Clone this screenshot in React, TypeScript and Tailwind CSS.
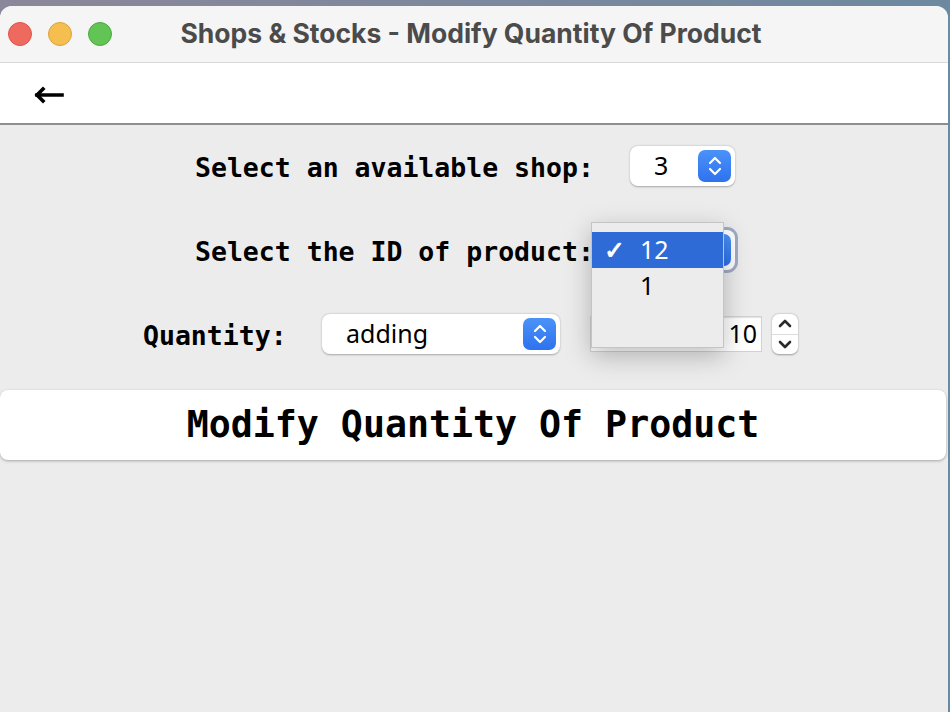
import React from 'react'

const mono = { fontFamily: '"DejaVu Sans Mono", "Liberation Mono", monospace' }

function BlueStepper() {
  return (
    <div className="flex h-[32px] w-[33px] items-center justify-center rounded-[7px] bg-gradient-to-b from-[#4b92f8] to-[#2e72ee]">
      <svg width="16" height="22" viewBox="0 0 16 22" fill="none" stroke="white" strokeWidth="2.2" strokeLinecap="round" strokeLinejoin="round">
        <path d="M3 8 L8 3 L13 8" />
        <path d="M3 14 L8 19 L13 14" />
      </svg>
    </div>
  )
}

function App() {
  return (
    <div className="h-[712px] w-[950px] overflow-hidden bg-gradient-to-r from-[#8b879a] to-[#6d89a0]">
      <div className="mt-[6px] flex h-[706px] w-[948px] flex-col overflow-hidden rounded-t-[12px] bg-[#ececec]">
        {/* title bar */}
        <div className="relative flex h-[57px] shrink-0 items-center border-b border-[#d9d9d9] bg-[#f5f5f5]">
          <div className="flex items-center gap-[16px] pl-[8px]">
            <div className="h-[24px] w-[24px] rounded-full border border-[#e0534c] bg-[#ee6a5f]" />
            <div className="h-[24px] w-[24px] rounded-full border border-[#dea13a] bg-[#f5bf4f]" />
            <div className="h-[24px] w-[24px] rounded-full border border-[#4ea940] bg-[#61c454]" />
          </div>
          <div className="absolute left-0 right-0 pr-[6px] text-center text-[26.5px] font-bold text-[#4b4b4b]" style={{ fontFamily: 'Inter, "Noto Sans", sans-serif' }}>
            Shops &amp; Stocks - Modify Quantity Of Product
          </div>
        </div>
        {/* toolbar */}
        <div className="flex h-[62px] shrink-0 items-center border-b-2 border-[#8e8e8e] bg-white pl-[34px] pt-[4px]">
          <svg width="30" height="18" viewBox="0 0 30 18" fill="none" stroke="black" strokeWidth="3.6" strokeLinecap="square" strokeLinejoin="miter">
            <path d="M3 9 H28" />
            <path d="M9 3 L3 9 L9 15" />
          </svg>
        </div>
        {/* content */}
        <div className="relative flex flex-col pt-[21px]" style={mono}>
          <div className="flex h-[40px] items-center pl-[195px]">
            <span className="w-[435px] pt-[4px] text-[26.5px] font-bold text-black">Select an available shop:</span>
            <div className="flex h-[40px] w-[105px] items-center justify-between rounded-[8px] bg-white pl-[24px] pr-[4px] shadow-[0_0.5px_2px_rgba(0,0,0,0.3)]">
              <span className="text-[25px] text-black" style={{ fontFamily: '"Noto Sans", sans-serif' }}>3</span>
              <BlueStepper />
            </div>
          </div>
          <div className="mt-[44px] flex h-[40px] items-center pl-[195px]">
            <span className="w-[401px] pt-[4px] text-[26.5px] font-bold text-black">Select the ID of product:</span>
            <div className="flex h-[40px] w-[139px] items-center justify-end rounded-[8px] bg-white pr-[4px] shadow-[0_0_0_3px_rgba(110,130,170,0.6)]">
              <BlueStepper />
            </div>
          </div>
          <div className="mt-[44px] flex h-[40px] items-center pl-[143px]">
            <span className="w-[179px] pt-[4px] text-[26.5px] font-bold text-black">Quantity:</span>
            <div className="flex h-[40px] w-[238px] items-center justify-between rounded-[8px] bg-white pl-[24px] pr-[4px] shadow-[0_0.5px_2px_rgba(0,0,0,0.3)]">
              <span className="text-[25px] text-black" style={{ fontFamily: '"Noto Sans", sans-serif' }}>adding</span>
              <BlueStepper />
            </div>
            <div className="ml-[30px] flex h-[36px] w-[172px] items-center justify-end border border-[#d2d2d2] bg-white pr-[4px] shadow-[inset_0_1px_1px_rgba(0,0,0,0.12)]">
              <span className="text-[25px] text-black" style={{ fontFamily: '"Noto Sans", sans-serif' }}>10</span>
            </div>
            <div className="ml-[10px] flex h-[40px] w-[26px] flex-col rounded-[7px] bg-white shadow-[0_0.5px_2px_rgba(0,0,0,0.35)]">
              <div className="flex flex-1 items-center justify-center border-b border-[#dcdcdc]">
                <svg width="16" height="12" viewBox="0 0 16 12" fill="none" stroke="#2b2b2b" strokeWidth="2.6" strokeLinecap="round" strokeLinejoin="round">
                  <path d="M3 8 L8 3 L13 8" />
                </svg>
              </div>
              <div className="flex flex-1 items-center justify-center">
                <svg width="16" height="12" viewBox="0 0 16 12" fill="none" stroke="#2b2b2b" strokeWidth="2.6" strokeLinecap="round" strokeLinejoin="round">
                  <path d="M3 4 L8 9 L13 4" />
                </svg>
              </div>
            </div>
          </div>
          <button className="mt-[36px] flex h-[70px] w-[946px] items-center justify-center rounded-[8px] bg-white text-[36.6px] font-bold text-black shadow-[0_1px_3px_rgba(0,0,0,0.3)]" style={mono}>
            Modify Quantity Of Product
          </button>

          {/* open popup menu */}
          <div className="absolute left-[591px] top-[97px] flex h-[126px] w-[133px] flex-col border border-[#c4c4c4] bg-[#ececec] pt-[9px] shadow-[0_8px_24px_rgba(0,0,0,0.25)]" style={{ fontFamily: '"Noto Sans", sans-serif' }}>
            <div className="flex h-[36px] items-center bg-[#2f6bd6] text-[25px] text-white">
              <span className="w-[48px] pl-[12px] font-bold">✓</span>
              <span>12</span>
            </div>
            <div className="flex h-[36px] items-center text-[25px] text-black">
              <span className="w-[48px]" />
              <span>1</span>
            </div>
          </div>
        </div>
      </div>
    </div>
  )
}

export default App
